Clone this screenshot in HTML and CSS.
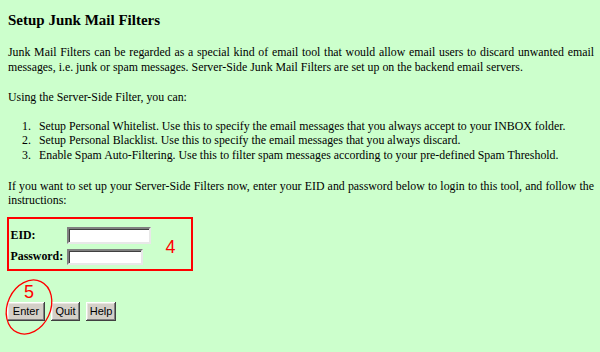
FILE: index.html
```html
<!DOCTYPE html>
<html>
<head>
<meta charset="utf-8">
<title>Setup Junk Mail Filters</title>
<link rel="stylesheet" href="styles.css">
</head>
<body>
<div class="page">
  <h1 class="title">Setup Junk Mail Filters</h1>
  <p class="intro">Junk Mail Filters can be regarded as a special kind of email tool that would allow email users to discard unwanted email messages, i.e. junk or spam messages. Server-Side Junk Mail Filters are set up on the backend email servers.</p>
  <p class="using">Using the Server-Side Filter, you can:</p>
  <ol class="features">
    <li>Setup Personal Whitelist. Use this to specify the email messages that you always accept to your INBOX folder.</li>
    <li>Setup Personal Blacklist. Use this to specify the email messages that you always discard.</li>
    <li>Enable Spam Auto-Filtering. Use this to filter spam messages according to your pre-defined Spam Threshold.</li>
  </ol>
  <p class="instr">If you want to set up your Server-Side Filters now, enter your EID and password below to login to this tool, and follow the instructions:</p>
  <form class="login">
    <div class="login-box">
      <label class="lbl" for="eid">EID:</label>
      <input class="field field-eid" id="eid" type="text">
      <span class="mark mark-4">4</span>
      <label class="lbl" for="pw">Password:</label>
      <input class="field field-pw" id="pw" type="password">
    </div>
    <div class="buttons">
      <button type="button" class="btn btn-enter">Enter</button>
      <button type="button" class="btn btn-quit">Quit</button>
      <button type="button" class="btn btn-help">Help</button>
      <svg class="circle" width="60" height="64" viewBox="0 0 60 64" aria-hidden="true">
        <ellipse cx="29" cy="31" rx="21.5" ry="28" transform="rotate(25 29 31)" fill="none" stroke="#ff0000" stroke-width="1.3"/>
      </svg>
      <span class="mark mark-5">5</span>
    </div>
  </form>
</div>
</body>
</html>
```
FILE: styles.css
```css
html, body {
  margin: 0;
  padding: 0;
  background: #ccffcc;
}
body {
  width: 600px;
  height: 352px;
  overflow: hidden;
  font-family: "Liberation Serif", "Times New Roman", serif;
  font-size: 11.85px;
  line-height: 14.6px;
  color: #000;
}
.page {
  padding: 0 6px 0 8px;
}
.title {
  margin: 11px 0 16px;
  font-size: 15px;
  line-height: 18px;
  font-weight: bold;
}
.intro,
.instr {
  text-align: justify;
}
.intro {
  margin: 0 0 16px;
}
.using {
  margin: 0 0 14px;
}
.features {
  margin: 0 0 16px;
  padding-left: 31px;
  list-style: none;
  counter-reset: feat;
}
.features li {
  position: relative;
  counter-increment: feat;
}
.features li::before {
  content: counter(feat) ".";
  position: absolute;
  left: -17px;
}
.instr {
  margin: 0 0 9px;
}
.login {
  margin: 0;
}
.login-box {
  box-sizing: border-box;
  width: 186px;
  height: 54px;
  margin-left: -1px;
  border: 2px solid #ff0000;
  padding: 8px 0 0 1.5px;
  display: grid;
  grid-template-columns: 56px 84px 1fr;
  grid-template-rows: 17px 16px;
  row-gap: 5px;
  align-items: center;
}
.lbl {
  font-weight: bold;
  font-size: 11.85px;
}
.field {
  box-sizing: border-box;
  margin: 0;
  padding: 0 2px;
  background: #fff;
  border-style: solid;
  border-width: 2px;
  border-color: #808080 #e8e8e8 #e8e8e8 #808080;
  box-shadow: inset 1px 1px 0 #404040;
  font-size: 12px;
  outline: none;
}
.field-eid {
  width: 84px;
  height: 17px;
}
.field-pw {
  width: 76px;
  height: 16px;
}
.mark {
  font-family: "Liberation Sans", Arial, sans-serif;
  font-size: 18px;
  line-height: 18px;
  color: #ff0000;
}
.mark-4 {
  grid-column: 3;
  grid-row: 1 / span 2;
  margin: 2px 0 0 15px;
}
.buttons {
  position: relative;
  margin-top: 31px;
  display: flex;
  gap: 6px;
}
.btn {
  box-sizing: border-box;
  height: 19px;
  margin: 0;
  padding: 0;
  background: #d4d0c8;
  border: none;
  box-shadow: inset -1px -1px 0 #404040, inset 1px 1px 0 #ffffff, inset -2px -2px 0 #808080, inset 2px 2px 0 #e8e6e0;
  font-family: "Liberation Sans", Arial, sans-serif;
  font-size: 11px;
  color: #000;
}
.btn-enter { width: 38px; margin-left: -1px; }
.btn-quit { width: 29px; }
.btn-help { width: 30px; }
.circle {
  position: absolute;
  left: -8px;
  top: -26px;
}
.mark-5 {
  position: absolute;
  left: 16px;
  top: -19px;
}
```
